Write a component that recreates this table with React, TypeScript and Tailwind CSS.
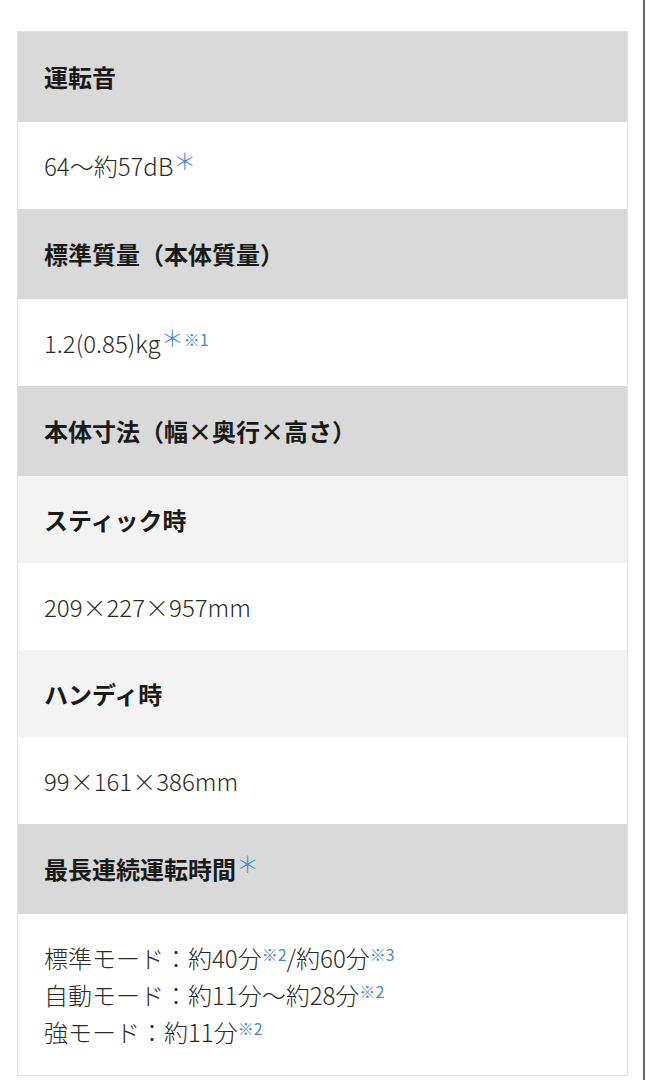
const FONT = { fontFamily: '"Noto Sans CJK JP", "Noto Sans", sans-serif' }

type Row =
  | { kind: 'head'; text: string; star?: boolean }
  | { kind: 'sub'; text: string }
  | { kind: 'value'; lines: React.ReactNode[] }

// full-width asterisk, lifted to the cap line
const Star = () => (
  <span className="relative -top-[6px] text-[23px] font-light leading-none text-[#4a88d2]">＊</span>
)

const Note = ({ n }: { n: string }) => (
  <span className="relative -top-[7px] text-[16px] font-normal leading-none text-[#4a88d2]">※{n}</span>
)

const ROWS: Row[] = [
  { kind: 'head', text: '運転音' },
  {
    kind: 'value',
    lines: [
      <>
        64〜約57dB
        <Star />
      </>,
    ],
  },
  { kind: 'head', text: '標準質量（本体質量）' },
  {
    kind: 'value',
    lines: [
      <>
        1.2(0.85)kg
        <Star />
        <Note n="1" />
      </>,
    ],
  },
  { kind: 'head', text: '本体寸法（幅×奥行×高さ）' },
  { kind: 'sub', text: 'スティック時' },
  { kind: 'value', lines: ['209×227×957mm'] },
  { kind: 'sub', text: 'ハンディ時' },
  { kind: 'value', lines: ['99×161×386mm'] },
  { kind: 'head', text: '最長連続運転時間', star: true },
  {
    kind: 'value',
    lines: [
      <>
        標準モード：約40分
        <Note n="2" />
        /約60分
        <Note n="3" />
      </>,
      <>
        自動モード：約11分〜約28分
        <Note n="2" />
      </>,
      <>
        強モード：約11分
        <Note n="2" />
      </>,
    ],
  },
]

const SpecRow = ({ row }: { row: Row }) => {
  if (row.kind === 'head')
    return (
      <div className="bg-[#d9d9d9] px-[26px] py-[26px] text-[24px] font-bold leading-[38px] text-[#1a1a1a]">
        {row.text}
        {row.star && <Star />}
      </div>
    )
  if (row.kind === 'sub')
    return (
      <div className="bg-[#f3f3f3] px-[26px] py-[25px] text-[24px] font-bold leading-[37px] text-[#1a1a1a]">
        {row.text}
      </div>
    )
  return (
    <div className="bg-white px-[26px] py-[25px] text-[24px] font-light leading-[37px] text-[#2a2a2a]">
      {row.lines.map((l, i) => (
        <div key={i}>{l}</div>
      ))}
    </div>
  )
}

export default function App() {
  return (
    <div className="flex h-[1080px] w-[646px] overflow-hidden bg-white" style={FONT}>
      <div className="flex-1 pl-[17px] pr-[15px] pt-[31px]">
        <div className="flex flex-col border border-[#e2e2e2]">
          {ROWS.map((r, i) => (
            <SpecRow key={i} row={r} />
          ))}
        </div>
      </div>
      <div className="w-[2px] bg-[#6a6a6a]" />
      <div className="w-[1px]" />
    </div>
  )
}
